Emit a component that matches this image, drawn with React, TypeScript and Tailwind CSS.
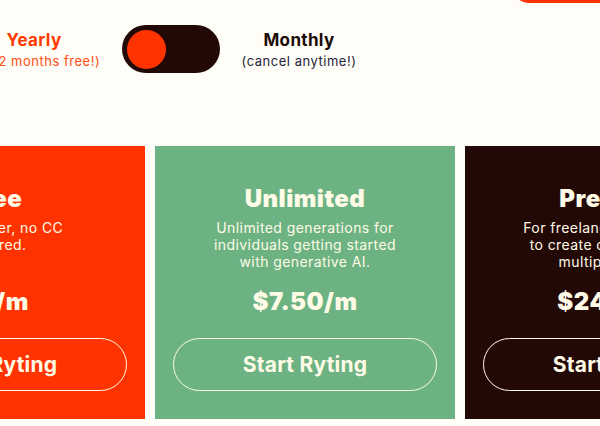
const plans = [
  {
    name: "Free",
    lines: ["Free forever, no CC", "required."],
    price: "$0/m",
    bg: "bg-[#ff3300]",
  },
  {
    name: "Unlimited",
    lines: ["Unlimited generations for", "individuals getting started", "with generative AI."],
    price: "$7.50/m",
    bg: "bg-[#6cb283]",
  },
  {
    name: "Premium",
    lines: ["For freelancers and teams", "to create content across", "multiple brands."],
    price: "$24.17/m",
    bg: "bg-[#230906]",
  },
];

function Toggle() {
  return (
    <div className="ml-[-36px] flex items-center">
      <div className="w-[140px] text-center">
        <div className="text-[17px] leading-6 font-bold tracking-[0.02em] text-[#ff3a00]">Yearly</div>
        <div className="text-[13px] leading-[18px] tracking-[0.04em] text-[#ff4d14]">
          (get 2 months free!)
        </div>
      </div>
      <button
        aria-label="Billing period"
        className="ml-[18px] flex h-12 w-[98px] items-center rounded-full bg-[#230906] px-[5px]"
      >
        <span className="h-[39px] w-[39px] rounded-full bg-[#ff3300]" />
      </button>
      <div className="ml-5 w-[118px] shrink-0 text-center">
        <div className="text-[17px] leading-6 font-bold tracking-[0.02em] text-[#1c0a06]">Monthly</div>
        <div className="text-[13px] leading-[18px] tracking-[0.04em] whitespace-nowrap text-[#26243a]">
          (cancel anytime!)
        </div>
      </div>
    </div>
  );
}

export default function App() {
  return (
    <div
      className="h-[426px] w-[600px] overflow-hidden bg-[#fffdf7]"
      style={{ fontFamily: "Inter, 'Open Sans', sans-serif" }}
    >
      <div className="flex justify-end">
        <div className="mr-[-30px] mt-[-37px] h-10 w-[120px] rounded-full bg-[#ff3300]" />
      </div>

      <div className="mt-[22px]">
        <Toggle />
      </div>

      <div className="ml-[-155px] mt-[73px] flex gap-[10px]">
        {plans.map((plan) => (
          <div
            key={plan.name}
            className={`flex h-[273px] w-[300px] shrink-0 flex-col items-center px-[18px] pt-[37px] text-[#fffbe6] ${plan.bg}`}
          >
            <h3 className="text-[24px] leading-8 font-black tracking-[0.02em]">{plan.name}</h3>
            <p className="mt-1 min-h-[51px] text-center text-[14px] leading-[17px] tracking-[0.03em] whitespace-nowrap">
              {plan.lines.map((line) => (
                <span key={line} className="block">
                  {line}
                </span>
              ))}
            </p>
            <div className="mt-4 text-[24px] leading-8 font-black tracking-[0.02em]">{plan.price}</div>
            <button className="mt-5 h-[53px] w-full rounded-full border border-[#fffbe6] text-[21px] font-bold tracking-[0.01em]">
              Start Ryting
            </button>
          </div>
        ))}
      </div>
    </div>
  );
}
